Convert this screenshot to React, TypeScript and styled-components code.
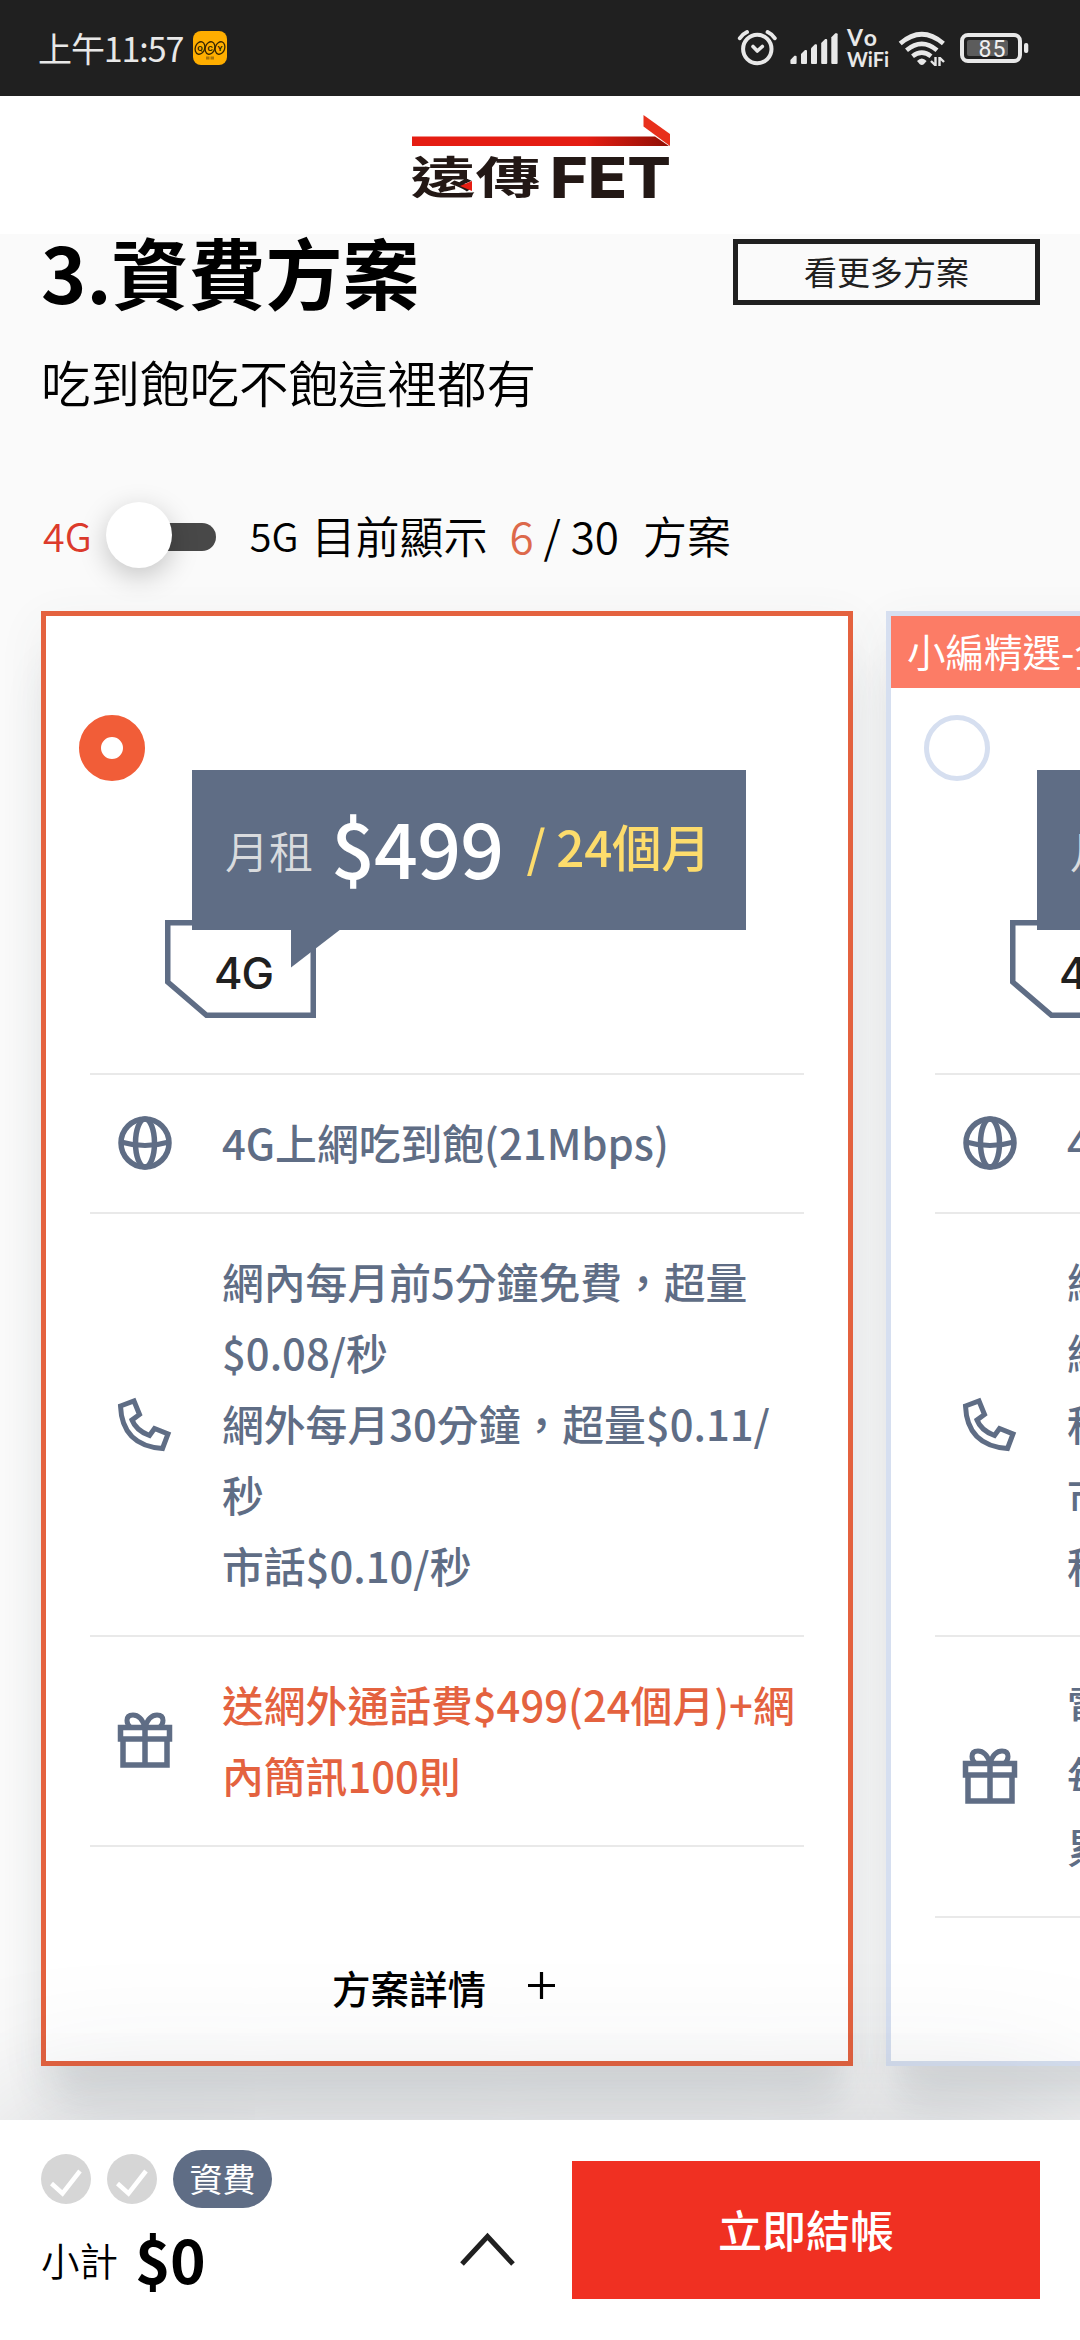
import React from "react";
import styled, { createGlobalStyle } from "styled-components";

const slate = "#5f6d85";
const cjk = `"Noto Sans CJK TC", "Noto Sans", sans-serif`;

const GlobalStyle = createGlobalStyle`
  * { box-sizing: border-box; }
  body { margin: 0; background: #fafafa; font-family: ${cjk}; color: #000; }
`;

const Screen = styled.div`
  width: 1080px;
  height: 2340px;
  display: flex;
  flex-direction: column;
  overflow: hidden;
  background: #fafafa;
`;

/* ---------- status bar ---------- */

const StatusBar = styled.div`
  height: 96px;
  flex: none;
  background: #202020;
  color: #e8e8e8;
  display: flex;
  align-items: center;
  padding: 0 51px 0 38px;
`;

const Clock = styled.span`
  width: 155px;
  font-size: 34px;
  line-height: 50px;
  letter-spacing: -1.1px;
`;

const StatusIcons = styled.div`
  margin-left: auto;
  display: flex;
  align-items: center;
  height: 96px;
`;

/* ---------- brand header ---------- */

const Header = styled.header`
  height: 138px;
  flex: none;
  background: #fff;
  display: flex;
  justify-content: center;
  padding: 17px 0 0 2px;
`;

/* ---------- main ---------- */

const Main = styled.main`
  height: 1886px;
  flex: none;
  display: flex;
  flex-direction: column;
  overflow: hidden;
`;

const TitleRow = styled.div`
  display: flex;
  justify-content: space-between;
  padding: 0 40px 0 41px;
`;

const Title = styled.h1`
  margin: 0;
  font-size: 77px;
  line-height: 74px;
  font-weight: 700;
`;

const MoreButton = styled.button`
  margin: 5px 0 0;
  width: 307px;
  height: 66px;
  padding: 0 0 2px;
  border: 5px solid #202020;
  background: transparent;
  color: #202020;
  font: 400 33px/50px ${cjk};
`;

const Subtitle = styled.p`
  margin: 39px 0 0 41px;
  font-size: 49.5px;
  line-height: 70px;
  font-weight: 350;
`;

const FilterRow = styled.div`
  display: flex;
  align-items: center;
  height: 66px;
  margin: 85px 0 43px;
  padding-left: 43px;
`;

const Generation = styled.span<{ $active?: boolean }>`
  font-size: 39.5px;
  line-height: 60px;
  font-weight: 350;
  color: ${(p) => (p.$active ? "#dc3a2c" : "#000")};
`;

const Switch = styled.div`
  width: 99px;
  height: 28px;
  margin: 4px 34px 0 25px;
  border-radius: 14px;
  background: #484848;
  display: flex;
  align-items: center;
`;

const Knob = styled.div`
  flex: none;
  width: 66px;
  height: 66px;
  margin: -5px 0 0 -11px;
  border-radius: 50%;
  background: #fff;
  box-shadow: 0 8px 28px rgba(0, 0, 0, 0.22);
`;

const CountText = styled.span<{ $accent?: boolean; $left: number }>`
  font-size: 44px;
  line-height: 64px;
  font-weight: 350;
  white-space: pre;
  margin-left: ${(p) => p.$left}px;
  color: ${(p) => (p.$accent ? "#dd694b" : "#000")};
`;

/* ---------- plan cards ---------- */

const Carousel = styled.div`
  display: flex;
  gap: 33px;
  padding-left: 41px;
`;

const Card = styled.article<{ $selected?: boolean }>`
  flex: none;
  width: 812px;
  height: 1455px;
  border: 5px solid ${(p) => (p.$selected ? "#e4623f" : "#d6dff0")};
  background: #fff;
  box-shadow: 0 12px 44px rgba(70, 85, 85, 0.07), 0 50px 44px -10px rgba(50, 65, 80, 0.12);
  display: flex;
  flex-direction: column;
`;

const Ribbon = styled.div<{ $show: boolean }>`
  height: 72px;
  flex: none;
  padding-left: 16px;
  font-size: 38.5px;
  line-height: 69px;
  color: #fff;
  white-space: nowrap;
  background: ${(p) => (p.$show ? "#fc7c66" : "transparent")};
`;

const Radio = styled.div<{ $checked?: boolean }>`
  flex: none;
  width: 66px;
  height: 66px;
  margin: 27px 0 0 33px;
  border-radius: 50%;
  border: ${(p) => (p.$checked ? "22px solid #f15d38" : "5px solid #d6dff0")};
`;

const PriceArea = styled.div`
  flex: none;
  position: relative;
  margin: -11px 0 0 146px;
  width: 554px;
  height: 303px;
`;

const PriceBox = styled.div`
  position: relative;
  height: 160px;
  padding: 0 0 10px 33px;
  background: ${slate};
  display: flex;
  align-items: center;
  white-space: pre;
`;

const PriceLabel = styled.span`
  font-size: 44px;
  margin: 9px 18px 0 0;
  font-weight: 350;
  color: #d9dbde;
`;

const PriceValue = styled.span`
  font-size: 77px;
  font-weight: 500;
  letter-spacing: -0.8px;
  color: #fff;
`;

const PriceTerm = styled.span`
  font-size: 49.5px;
  font-weight: 500;
  letter-spacing: -0.3px;
  color: #fddc6c;
  margin-left: 23px;
`;

const TagShape = styled.svg`
  position: absolute;
  left: -27px;
  top: 150px;
`;

const TailShape = styled.svg`
  position: absolute;
  left: 99px;
  top: 159px;
`;

const TagText = styled.span`
  position: absolute;
  left: 22px;
  top: 177px;
  font: 500 43.5px/52px Inter, sans-serif;
  letter-spacing: -1px;
  color: #202020;
`;

const FeatureList = styled.ul`
  list-style: none;
  margin: 0 44px;
  padding: 0;
`;

const Feature = styled.li<{ $accent?: boolean }>`
  display: flex;
  align-items: center;
  padding: 32px 0 34px 26px;
  border-top: 2px solid #e9e9e9;
  color: ${(p) => (p.$accent ? "#e4623f" : slate)};
  &:last-child { border-bottom: 2px solid #e9e9e9; }
`;

const FeatureText = styled.div`
  margin-left: 48px;
  font-size: 41.8px;
  line-height: 71px;
  font-weight: 500;
  white-space: nowrap;
`;

const FeatureLine = styled.div``;

const DetailRow = styled.div`
  margin-top: auto;
  height: 152px;
  display: flex;
  justify-content: center;
  font-size: 38.5px;
  line-height: 157px;
  font-weight: 500;
  padding-right: 7px;
`;

const PlusIcon = styled.svg`
  margin: 63px 0 0 42px;
`;

/* ---------- checkout footer ---------- */

const Footer = styled.footer`
  position: relative;
  height: 220px;
  flex: none;
  background: #fff;
  box-shadow: 0 0 150px rgba(50, 58, 72, 0.25);
  display: flex;
  padding: 0 40px 0 41px;
`;

const Summary = styled.div`
  width: 419px;
  padding-top: 30px;
`;

const Steps = styled.div`
  display: flex;
  align-items: center;
  gap: 16px;
`;

const CurrentStep = styled.span`
  width: 99px;
  height: 58px;
  border-radius: 29px;
  background: ${slate};
  color: #fff;
  font-size: 33px;
  line-height: 56px;
  text-align: center;
`;

const Subtotal = styled.div`
  display: flex;
  align-items: center;
  height: 71px;
  margin-top: 14px;
`;

const SubtotalLabel = styled.span`
  font-size: 38.5px;
  font-weight: 350;
  margin: 2px 17px 0 0;
`;

const SubtotalValue = styled.span`
  font-size: 60.5px;
  line-height: 70px;
  font-weight: 700;
  letter-spacing: -0.8px;
`;

const Chevron = styled.svg`
  margin-top: 111px;
`;

const CheckoutButton = styled.button`
  margin: 41px 0 0 auto;
  width: 468px;
  height: 138px;
  border: 0;
  padding: 0 0 2px;
  background: #f03022;
  color: #fff;
  font: 500 44px/64px ${cjk};
`;

/* ---------- drawings ---------- */

const BadgeIcon = () => (
  <svg width="34" height="34" viewBox="0 0 34 34">
    <rect width="34" height="34" rx="8" fill="#ffae00" />
    <g fill="none" stroke="#3a2800" strokeWidth="1.3">
      <ellipse cx="7" cy="17" rx="4.7" ry="6.4" transform="rotate(18 7 17)" />
      <ellipse cx="17" cy="17" rx="4.7" ry="6.4" transform="rotate(18 17 17)" />
      <ellipse cx="27" cy="17" rx="4.7" ry="6.4" transform="rotate(18 27 17)" />
    </g>
    <g fontFamily="Roboto, sans-serif" fontWeight="700" fontSize="8" fill="#2a1c00" textAnchor="middle">
      <text x="7" y="20">Q</text>
      <text x="17" y="20">C</text>
      <text x="27" y="20">Y</text>
    </g>
    <rect x="13" y="25.500" width="3.500" height="3" fill="#a87408" />
    <rect x="17.500" y="25.500" width="3.500" height="3" fill="#a87408" />
  </svg>
);

const StatusGlyphs = () => (
  <svg width="292" height="40" viewBox="738 28 292 40" overflow="visible">
    <g fill="none" stroke="#e8e8e8" strokeLinecap="round">
      <circle cx="758.300" cy="49" r="14.200" strokeWidth="4" />
      <path d="M754 46.500l4.300 4.500 5-4.500" strokeWidth="3.600" strokeLinejoin="round" />
      <path d="M740.800 38.200q2.500-4 7.200-6.200M775.800 38.200q-2.500-4-7.200-6.200" strokeWidth="4" />
    </g>
    <g fill="#e8e8e8">
      <path d="M791.400 60l4-4.300h1.200q1 0 1 1v6.300q0 1-1 1h-4.200q-1 0-1-1z" />
      <path d="M802 54l4-4h1q1 0 1 1v12q0 1-1 1h-4q-1 0-1-1z" />
      <path d="M812 48.300l4-4h1q1 0 1 1v17.700q0 1-1 1h-4q-1 0-1-1z" />
      <path d="M822.200 43l4-4h1q1 0 1 1v23q0 1-1 1h-4q-1 0-1-1z" />
      <path d="M832.300 37.300l4-4h1.300q1 0 1 1v28.700q0 1-1 1h-4.300q-1 0-1-1z" />
    </g>
    <g fontFamily="Lato, sans-serif" fontWeight="700" fill="#e8e8e8">
      <text x="848" y="46" fontSize="23" textLength="30">Vo</text>
      <text x="848" y="67" fontSize="21.500" textLength="42" lengthAdjust="spacingAndGlyphs">WiFi</text>
    </g>
    <g fill="none" stroke="#e8e8e8" strokeWidth="4.600">
      <path d="M901.200 43.500Q922.800 25 944.400 43.500" />
      <path d="M907.500 50.200Q922.800 37.500 938 50.200" />
      <path d="M913.500 56.200Q922.800 49 932 56.200" />
    </g>
    <path d="M918 61q4.800-5 9.600 0l-2.800 3.200q-2 1.600-4 0z" fill="#e8e8e8" />
    <path d="M936.500 57v9M932 61l4 4M940.500 66v-9M945 62l-4-4" stroke="#e8e8e8" strokeWidth="2.400" fill="none" />
    <rect x="963" y="35" width="58" height="26" rx="6" fill="none" stroke="#e8e8e8" strokeWidth="4" />
    <rect x="968" y="40" width="41" height="16" rx="2" fill="#5c5c5c" />
    <rect x="1025" y="43" width="4.300" height="10" rx="2" fill="#e8e8e8" />
    <text x="979.500" y="56.500" fontFamily="Roboto, sans-serif" fontWeight="400" fontSize="23" textLength="27" fill="#f0f0f0">85</text>
  </svg>
);

const BrandLogo = () => (
  <svg width="260" height="90" viewBox="411 113 260 90" overflow="visible">
    <defs>
      <linearGradient id="bar" x1="0" x2="1">
        <stop offset="0.680" stopColor="#e51d12" />
        <stop offset="1" stopColor="#8f0f05" />
      </linearGradient>
    </defs>
    <path d="M412 136.500H655L669 146H412z" fill="url(#bar)" />
    <path d="M643.500 115L670 134V146L643.500 126.500z" fill="#e8301c" />
    <g fill="#231815">
      <text transform="translate(410.500 194) scale(1.460 1)" fontFamily="Noto Sans CJK TC, sans-serif" fontWeight="700" fontSize="44.500">遠傳</text>
      <text x="550" y="198" fontFamily="Inter, sans-serif" fontWeight="800" fontSize="56.500" textLength="121" lengthAdjust="spacingAndGlyphs">FET</text>
    </g>
    <path d="M460 186L472 181V191z" fill="#e51d12" />
  </svg>
);

const GlobeIcon = () => (
  <svg width="58" height="58" viewBox="0 0 58 58" fill="none" stroke={slate} strokeWidth="5.500">
    <circle cx="29" cy="29" r="24" />
    <ellipse cx="29" cy="29" rx="9.500" ry="24" />
    <path d="M5 28q24 7 48 0" strokeWidth="5" />
  </svg>
);

const PhoneIcon = () => (
  <svg width="58" height="58" viewBox="0 -1.500 58 58" fill="none" stroke={slate} strokeWidth="5">
    <path d="M4.500 9.500L18 4.500L23.500 18L16 23.500Q20 34 33.500 39L38.500 32L52 37.500L46.500 52Q6 49 4.500 9.500z" />
  </svg>
);

const GiftIcon = () => (
  <svg width="58" height="58" viewBox="0 0 58 58" fill="none" stroke={slate} strokeWidth="5.500">
    <path d="M4.500 16.500H53.500V28H4.500zM7 28V54H51V28M29 16V54" />
    <path d="M29 16Q25 4 17 4Q11 4 11 9.500Q11 13 14 16M29 16Q33 4 41 4Q47 4 47 9.500Q47 13 44 16" strokeWidth="5" />
  </svg>
);

const DoneStep = () => (
  <svg width="50" height="50" viewBox="0 0 50 50">
    <circle cx="25" cy="25" r="25" fill="#d6d6d6" />
    <path d="M10.500 29.500L21.500 39.500L39 17" fill="none" stroke="#fff" strokeWidth="4.500" />
  </svg>
);

/* ---------- data and page ---------- */

type Plan = { selected?: boolean; ribbon?: string; data: string; calls: string[]; gift: string[] };

const plans: Plan[] = [
  {
    selected: true,
    data: "4G上網吃到飽(21Mbps)",
    calls: ["網內每月前5分鐘免費，超量", "$0.08/秒", "網外每月30分鐘，超量$0.11/", "秒", "市話$0.10/秒"],
    gift: ["送網外通話費$499(24個月)+網", "內簡訊100則"],
  },
  {
    ribbon: "小編精選-全",
    data: "4",
    calls: ["網", "網", "秒", "市", "秒"],
    gift: ["電", "每", "累"],
  },
];

const Lines = ({ lines }: { lines: string[] }) => (
  <FeatureText>
    {lines.map((line, i) => (
      <FeatureLine key={i}>{line}</FeatureLine>
    ))}
  </FeatureText>
);

const PlanCard = ({ plan }: { plan: Plan }) => (
  <Card $selected={plan.selected}>
    <Ribbon $show={!!plan.ribbon}>{plan.ribbon}</Ribbon>
    <Radio $checked={plan.selected} />
    <PriceArea>
      <TagShape width="151" height="98" viewBox="0 0 151 98">
        <path d="M2.750 2.750H148.250V95.250H41.500L2.750 62z" fill="#fff" stroke={slate} strokeWidth="5.500" />
      </TagShape>
      <PriceBox>
        <PriceLabel>月租</PriceLabel>
        {plan.selected && (
          <>
            <PriceValue>$499</PriceValue>
            <PriceTerm>/ 24個月</PriceTerm>
          </>
        )}
      </PriceBox>
      <TailShape width="50" height="39" viewBox="0 0 50 39">
        <path d="M0 0H50L0 38.500z" fill={slate} />
      </TailShape>
      <TagText>4G</TagText>
    </PriceArea>
    <FeatureList>
      <Feature>
        <GlobeIcon />
        <Lines lines={[plan.data]} />
      </Feature>
      <Feature>
        <PhoneIcon />
        <Lines lines={plan.calls} />
      </Feature>
      <Feature $accent={plan.selected}>
        <GiftIcon />
        <Lines lines={plan.gift} />
      </Feature>
    </FeatureList>
    {plan.selected && (
      <DetailRow>
        方案詳情
        <PlusIcon width="27" height="27" viewBox="0 0 27 27">
          <path d="M13.500 0V27M0 13.500H27" stroke="#000" strokeWidth="3.200" />
        </PlusIcon>
      </DetailRow>
    )}
  </Card>
);

export default function App() {
  return (
    <Screen>
      <GlobalStyle />
      <StatusBar>
        <Clock>上午11:57</Clock>
        <BadgeIcon />
        <StatusIcons>
          <StatusGlyphs />
        </StatusIcons>
      </StatusBar>
      <Header>
        <BrandLogo />
      </Header>
      <Main>
        <TitleRow>
          <Title>3.資費方案</Title>
          <MoreButton>看更多方案</MoreButton>
        </TitleRow>
        <Subtitle>吃到飽吃不飽這裡都有</Subtitle>
        <FilterRow>
          <Generation $active>4G</Generation>
          <Switch>
            <Knob />
          </Switch>
          <Generation>5G</Generation>
          <CountText $left={13}>目前顯示</CountText>
          <CountText $left={22} $accent>6</CountText>
          <CountText $left={10}>/ 30</CountText>
          <CountText $left={24}>方案</CountText>
        </FilterRow>
        <Carousel>
          {plans.map((plan, i) => (
            <PlanCard key={i} plan={plan} />
          ))}
        </Carousel>
      </Main>
      <Footer>
        <Summary>
          <Steps>
            <DoneStep />
            <DoneStep />
            <CurrentStep>資費</CurrentStep>
          </Steps>
          <Subtotal>
            <SubtotalLabel>小計</SubtotalLabel>
            <SubtotalValue>$0</SubtotalValue>
          </Subtotal>
        </Summary>
        <Chevron width="55" height="36" viewBox="0 0 55 36">
          <path d="M2 33L27.500 5.500L53 33" fill="none" stroke="#202020" strokeWidth="5" />
        </Chevron>
        <CheckoutButton>立即結帳</CheckoutButton>
      </Footer>
    </Screen>
  );
}
